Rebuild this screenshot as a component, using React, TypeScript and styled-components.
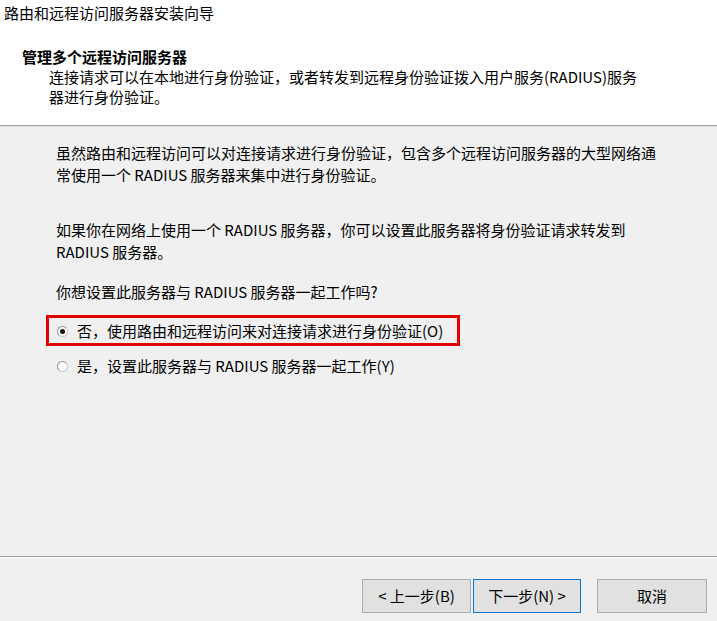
import React from "react";
import styled, { createGlobalStyle } from "styled-components";

const Global = createGlobalStyle`
  html, body { margin: 0; padding: 0; background: #f0f0f0; }
  body {
    font-family: "Noto Sans CJK SC", "Microsoft YaHei", "Noto Sans", sans-serif;
    color: #000;
  }
`;

const Window = styled.div`
  width: 717px;
  height: 621px;
  display: flex;
  flex-direction: column;
  background: #f0f0f0;
  font-size: 15px;
  overflow: hidden;
`;

const Header = styled.header`
  height: 125px;
  background: #ffffff;
  border-bottom: 1px solid #a0a0a0;
  box-shadow: 0 1px 0 #e3e3e3;
  margin-bottom: 1px;
  box-sizing: content-box;
  display: flex;
  flex-direction: column;
`;

const WindowTitle = styled.div`
  line-height: 20px;
  padding: 3px 0 0 4px;
  white-space: nowrap;
`;

const Heading = styled.div`
  font-weight: 700;
  line-height: 20px;
  margin-top: 24px;
  padding-left: 22px;
  white-space: nowrap;
`;

const SubText = styled.div`
  line-height: 20px;
  padding-left: 49px;
  white-space: nowrap;
`;

const Main = styled.main`
  flex: 1;
  display: flex;
  flex-direction: column;
  padding: 15px 0 0 0;
  border-bottom: 1px solid #a0a0a0;
  box-shadow: 0 1px 0 #ffffff;
`;

const Paragraph = styled.p<{ $gap: number }>`
  margin: 0 0 ${(p) => p.$gap}px 56px;
  line-height: 22px;
  white-space: nowrap;
`;

const Options = styled.div`
  display: flex;
  flex-direction: column;
  gap: 4px;
  padding-left: 46px;
`;

const OptionRow = styled.label<{ $focused?: boolean }>`
  width: 414px;
  height: 31px;
  box-sizing: border-box;
  border: 3px solid ${(p) => (p.$focused ? "#e00000" : "transparent")};
  display: flex;
  align-items: center;
  gap: 9px;
  padding-left: 8px;
  white-space: nowrap;
  line-height: 20px;
`;

const RadioDot = styled.span<{ $checked?: boolean }>`
  width: 11px;
  height: 11px;
  border-radius: 50%;
  box-sizing: border-box;
  border: 1px solid #8f8f8f;
  border-right-color: #c8c8c8;
  border-bottom-color: #c8c8c8;
  background: #ffffff;
  display: flex;
  align-items: center;
  justify-content: center;
  flex: none;
  margin-top: 2px;
  &::after {
    content: "";
    width: 5px;
    height: 5px;
    border-radius: 50%;
    background: ${(p) => (p.$checked ? "#111" : "transparent")};
  }
`;

const Footer = styled.footer`
  height: 64px;
  display: flex;
  align-items: flex-start;
  padding: 22px 10px 0 362px;
  box-sizing: border-box;
`;

const Button = styled.button<{ $default?: boolean; $w: number; $ml?: number }>`
  width: ${(p) => p.$w}px;
  height: 34px;
  margin-left: ${(p) => p.$ml ?? 0}px;
  background: #e1e1e1;
  border: 1px solid ${(p) => (p.$default ? "#0078d7" : "#adadad")};
  font-family: inherit;
  font-size: 15px;
  color: #000;
  padding: 0;
  line-height: 20px;
  white-space: nowrap;
`;

export default function App() {
  return (
    <>
      <Global />
      <Window>
        <Header>
          <WindowTitle>路由和远程访问服务器安装向导</WindowTitle>
          <Heading>管理多个远程访问服务器</Heading>
          <SubText>连接请求可以在本地进行身份验证，或者转发到远程身份验证拨入用户服务(RADIUS)服务</SubText>
          <SubText>器进行身份验证。</SubText>
        </Header>
        <Main>
          <Paragraph $gap={33}>
            虽然路由和远程访问可以对连接请求进行身份验证，包含多个远程访问服务器的大型网络通
            <br />
            常使用一个 RADIUS 服务器来集中进行身份验证。
          </Paragraph>
          <Paragraph $gap={18}>
            如果你在网络上使用一个 RADIUS 服务器，你可以设置此服务器将身份验证请求转发到
            <br />
            RADIUS 服务器。
          </Paragraph>
          <Paragraph $gap={12}>你想设置此服务器与 RADIUS 服务器一起工作吗?</Paragraph>
          <Options>
            <OptionRow $focused>
              <RadioDot $checked />
              否，使用路由和远程访问来对连接请求进行身份验证(O)
            </OptionRow>
            <OptionRow>
              <RadioDot />
              是，设置此服务器与 RADIUS 服务器一起工作(Y)
            </OptionRow>
          </Options>
        </Main>
        <Footer>
          <Button $w={109}>&lt; 上一步(B)</Button>
          <Button $w={108} $ml={2} $default>
            下一步(N) &gt;
          </Button>
          <Button $w={110} $ml={16}>取消</Button>
        </Footer>
      </Window>
    </>
  );
}
